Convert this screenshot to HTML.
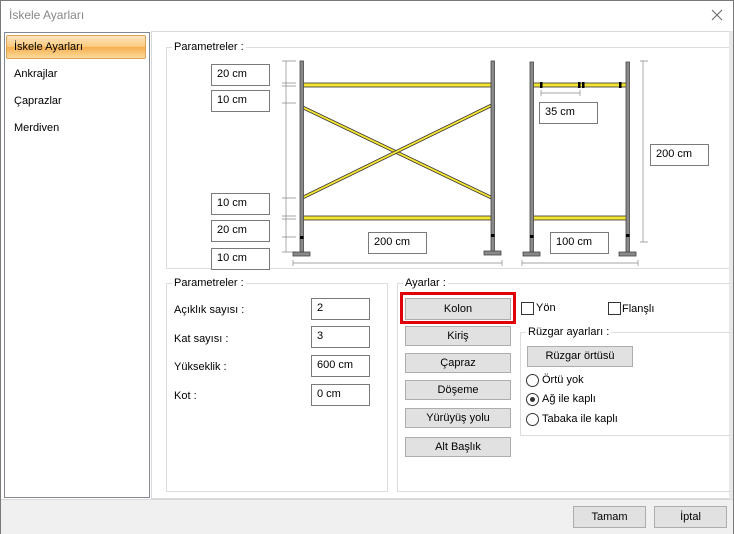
<!DOCTYPE html>
<html><head><meta charset="utf-8"><style>
*{box-sizing:border-box;margin:0;padding:0}
body{width:734px;height:534px;overflow:hidden;background:#fff;font-family:"Liberation Sans",sans-serif;font-size:11px;color:#000;position:relative}
.a{position:absolute}
.win{left:0;top:0;width:734px;height:534px;border:1px solid #7a7a7a;border-bottom:none}
.title{left:9px;top:8px;font-size:12px;color:#888}
.list{left:4px;top:32px;width:146px;height:466px;border:1px solid #828790;background:#fff}
.sel{left:6px;top:35px;width:140px;height:24px;border:1px solid #d9a35a;border-radius:2px;background:linear-gradient(#fde6c1,#fbc97a 50%,#f6b04f 51%,#fcd99a)}
.li{left:14px;font-size:11px}
.panel{left:151px;top:31px;width:579px;height:468px;border:1px solid #d9d9d9;background:#fff}
.bottom{left:1px;top:499px;width:732px;height:35px;background:#f0f0f0;border-top:1px solid #d9d9d9}
.grp{border:1px solid #dcdcdc}
.gl{background:#fff;padding:0 2px}
.tb{border:1px solid #7a7a7a;background:#fff;padding:3px 0 0 5px;height:22px;width:59px}
.btn{background:#e1e1e1;border:1px solid #adadad;text-align:center;line-height:18px}
.cb{width:13px;height:13px;border:1px solid #333;background:#fff}
.rb{width:13px;height:13px;border:1px solid #333;border-radius:50%;background:#fff}
</style></head><body>
<div class="a win"></div>
<div class="a title">İskele Ayarları</div>
<svg class="a" style="left:711px;top:9px" width="12" height="12"><path d="M1 1L11 11M11 1L1 11" stroke="#666" stroke-width="1"/></svg>
<div class="a list"></div>
<div class="a sel"></div>
<div class="a li" style="left:14px;top:41px">İskele Ayarları</div>
<div class="a li" style="top:68px">Ankrajlar</div>
<div class="a li" style="top:95px">Çaprazlar</div>
<div class="a li" style="top:122px">Merdiven</div>
<div class="a panel"></div>
<div class="a bottom"></div>
<div class="a" style="left:729px;top:31px;width:4px;height:468px;background:#e8e8e8"></div>

<div class="a grp" style="left:166px;top:47px;width:563px;height:222px;border-right:none"></div>
<div class="a gl" style="left:172px;top:41px">Parametreler :</div>

<svg class="a" style="left:160px;top:50px" width="570" height="225" viewBox="160 50 570 225">
<g stroke="#888" stroke-width="0.7" fill="none">
<path d="M286 61V252M282 61H296M282 83H296M282 86H296M282 103H296M282 198H296M282 216H296M282 219H296M282 237H296M282 252H296"/>
<path d="M293 263H502M293 260V266M502 260V266"/>
<path d="M522 263H638M522 260V266M638 260V266"/>
<path d="M643 61V242M640 61H648M640 242H648"/>
<path d="M541 93H580M541 90V96M580 90V96"/>
</g>
<g stroke="#333" stroke-width="0.8" fill="#f4e433">
<path d="M303 106L491 196L491 199L303 109Z"/>
<path d="M303 196L491 104L491 107L303 199Z"/>
<rect x="303" y="83" width="188" height="4"/>
<rect x="303" y="216" width="188" height="4"/>
<rect x="533" y="83" width="94" height="4"/>
<rect x="533" y="216" width="94" height="4"/>
</g>
<g fill="#8a8a8a" stroke="#444" stroke-width="0.8">
<rect x="300" y="61" width="3.5" height="191"/>
<rect x="491" y="61" width="3.5" height="191"/>
<rect x="530" y="62" width="3.5" height="190"/>
<rect x="626" y="62" width="3.5" height="190"/>
<rect x="293" y="252" width="17" height="4"/>
<rect x="484" y="251" width="17" height="4"/>
<rect x="523" y="252" width="17" height="4"/>
<rect x="619" y="252" width="17" height="4"/>
</g>
<g fill="#000">
<rect x="300" y="236" width="3.5" height="3"/><rect x="491" y="234" width="3.5" height="3"/>
<rect x="530" y="235" width="3.5" height="3"/><rect x="626" y="234" width="3.5" height="3"/>
<rect x="540" y="82" width="2.5" height="6"/><rect x="578" y="82" width="2.5" height="6"/><rect x="582" y="82" width="2.5" height="6"/><rect x="619" y="82" width="2.5" height="6"/>
</g>
</svg>

<div class="a tb" style="left:211px;top:64px">20 cm</div>
<div class="a tb" style="left:211px;top:90px">10 cm</div>
<div class="a tb" style="left:211px;top:193px">10 cm</div>
<div class="a tb" style="left:211px;top:220px">20 cm</div>
<div class="a tb" style="left:211px;top:248px">10 cm</div>
<div class="a tb" style="left:368px;top:232px">200 cm</div>
<div class="a tb" style="left:539px;top:102px">35 cm</div>
<div class="a tb" style="left:650px;top:144px">200 cm</div>
<div class="a tb" style="left:550px;top:232px">100 cm</div>

<div class="a grp" style="left:166px;top:283px;width:222px;height:209px"></div>
<div class="a gl" style="left:172px;top:277px">Parametreler :</div>
<div class="a" style="left:174px;top:304px">Açıklık sayısı :</div>
<div class="a" style="left:174px;top:333px">Kat sayısı :</div>
<div class="a" style="left:174px;top:361px">Yükseklik :</div>
<div class="a" style="left:174px;top:390px">Kot :</div>
<div class="a tb" style="left:311px;top:298px">2</div>
<div class="a tb" style="left:311px;top:326px">3</div>
<div class="a tb" style="left:311px;top:355px">600 cm</div>
<div class="a tb" style="left:311px;top:384px">0 cm</div>

<div class="a grp" style="left:397px;top:283px;width:333px;height:209px;border-right:none"></div>
<div class="a gl" style="left:403px;top:277px">Ayarlar :</div>
<div class="a" style="left:400px;top:292px;width:116px;height:32px;border:3px solid #e0000a"></div>
<div class="a btn" style="left:405px;top:298px;width:106px;height:22px;line-height:20px">Kolon</div>
<div class="a btn" style="left:405px;top:326px;width:106px;height:20px">Kiriş</div>
<div class="a btn" style="left:405px;top:353px;width:106px;height:20px">Çapraz</div>
<div class="a btn" style="left:405px;top:380px;width:106px;height:20px">Döşeme</div>
<div class="a btn" style="left:405px;top:408px;width:106px;height:20px">Yürüyüş yolu</div>
<div class="a btn" style="left:405px;top:437px;width:106px;height:20px">Alt Başlık</div>
<div class="a cb" style="left:521px;top:302px"></div>
<div class="a" style="left:536px;top:302px">Yön</div>
<div class="a cb" style="left:608px;top:302px"></div>
<div class="a" style="left:622px;top:303px">Flanşlı</div>

<div class="a grp" style="left:520px;top:332px;width:210px;height:104px;border-right:none"></div>
<div class="a gl" style="left:526px;top:326px">Rüzgar ayarları :</div>
<div class="a btn" style="left:527px;top:346px;width:106px;height:21px;line-height:19px">Rüzgar örtüsü</div>
<div class="a rb" style="left:526px;top:374px"></div>
<div class="a" style="left:542px;top:374px">Örtü yok</div>
<div class="a rb" style="left:526px;top:393px"><div class="a" style="left:3px;top:3px;width:5px;height:5px;border-radius:50%;background:#333"></div></div>
<div class="a" style="left:542px;top:393px">Ağ ile kaplı</div>
<div class="a rb" style="left:526px;top:413px"></div>
<div class="a" style="left:542px;top:413px">Tabaka ile kaplı</div>

<div class="a btn" style="left:573px;top:506px;width:73px;height:22px;line-height:20px">Tamam</div>
<div class="a btn" style="left:654px;top:506px;width:73px;height:22px;line-height:20px">İptal</div>
</body></html>
